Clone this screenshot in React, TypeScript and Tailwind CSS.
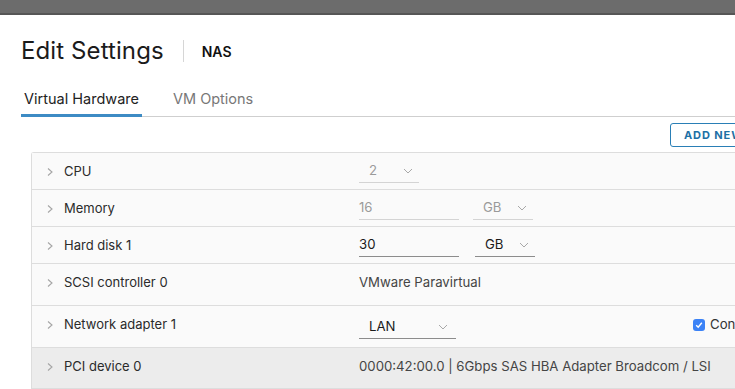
import React from 'react';

const font = { fontFamily: 'Inter, "Liberation Sans", sans-serif' };

const Chevron = () => (
    <svg width="8" height="10" viewBox="0 0 8 10" className="shrink-0">
        <polyline points="2,1.5 6,5 2,8.5" fill="none" stroke="#a5a5a5" strokeWidth="1.1" />
    </svg>
);

const Caret = () => (
    <svg width="10" height="6" viewBox="0 0 10 6" className="shrink-0">
        <polyline points="1,1 5,5 9,1" fill="none" stroke="#a8a8a8" strokeWidth="1" />
    </svg>
);

type RowProps = { label: string; h: string; pt?: string; bg?: string; children?: React.ReactNode };

const Row = ({ label, h, pt = 'pt-[8px]', bg = 'bg-[#fafafa]', children }: RowProps) => (
    <div className={`grid grid-cols-[327px_1fr] items-start border-b border-[#dddddd] ${h} ${bg}`}>
        <div className="flex items-center h-[22px] mt-[8px] pl-[14px] gap-[10px] text-[13px] text-[#2b2b2b]">
            <Chevron />
            <span>{label}</span>
        </div>
        <div className={`flex items-start text-[13.2px] whitespace-nowrap ${pt}`}>{children}</div>
    </div>
);

const App = () => {
    return (
        <div className="w-[735px] h-[389px] overflow-hidden bg-white" style={font}>
            <div className="h-[15px] bg-[#6c6c6c] border-b-2 border-[#565656]" />

            <div className="pl-[21px] pt-[21px]">
                <div className="flex items-center h-[30px]">
                    <h1 className="text-[24px] leading-[30px] text-[#1b1b1b] font-normal tracking-[0.1px]">Edit Settings</h1>
                    <div className="w-px h-[22px] bg-[#d6d6d6] ml-[19px] mr-[18px]" />
                    <span className="text-[14px] font-semibold text-[#111]">NAS</span>
                </div>

                <div className="mt-[22px] flex border-b border-[#cfcfcf] text-[14.5px]">
                    <div className="px-[3px] pb-[4px] border-b-[3px] border-[#3d8bc4] -mb-px text-[#222]">Virtual Hardware</div>
                    <div className="ml-[31px] pb-[4px] text-[#777]">VM Options</div>
                </div>
            </div>

            <div className="flex mt-[6px] pl-[670px]">
                <button className="shrink-0 h-[24px] w-[120px] border border-[#2a7fb6] rounded-[3px] text-left pl-[13px] text-[11px] font-bold tracking-[0.9px] text-[#1d6fa5] whitespace-nowrap">
                    ADD NEW DEVICE
                </button>
            </div>

            <div className="ml-[31px] mt-[5px] w-[720px] border-l border-t border-[#dddddd] rounded-tl-[3px]">
                <Row label="CPU" h="h-[37px]">
                    <div className="w-[60px] h-[22px] flex items-center justify-between pl-[10px] pr-[6px] border-b border-[#d4d4d4] text-[#9a9a9a]">
                        <span>2</span>
                        <Caret />
                    </div>
                </Row>
                <Row label="Memory" h="h-[37px]">
                    <div className="w-[100px] h-[22px] flex items-center border-b border-[#d4d4d4] text-[#9a9a9a]">16</div>
                    <div className="ml-[14px] w-[60px] h-[22px] flex items-center justify-between pl-[10px] pr-[6px] border-b border-[#d4d4d4] text-[#9a9a9a]">
                        <span>GB</span>
                        <Caret />
                    </div>
                </Row>
                <Row label="Hard disk 1" h="h-[37px]">
                    <div className="w-[100px] h-[22px] flex items-center border-b border-[#8c8c8c] text-[#1b1b1b]">30</div>
                    <div className="ml-[16px] w-[60px] h-[22px] flex items-center justify-between pl-[10px] pr-[6px] border-b border-[#8c8c8c] text-[#1b1b1b]">
                        <span>GB</span>
                        <Caret />
                    </div>
                </Row>
                <Row label="SCSI controller 0" h="h-[42px]">
                    <span className="h-[22px] flex items-center text-[#454545]">VMware Paravirtual</span>
                </Row>
                <Row label="Network adapter 1" h="h-[42px]" pt="pt-[11px]">
                    <div className="shrink-0 w-[97px] h-[22px] flex items-center justify-between pl-[10px] pr-[8px] border-b border-[#8c8c8c] text-[#1b1b1b]">
                        <span>LAN</span>
                        <Caret />
                    </div>
                    <div className="shrink-0 ml-[237px] -mt-[3px] h-[22px] flex items-center gap-[5px] text-[#333]">
                        <span className="w-[12px] h-[12px] rounded-[3px] bg-[#3b82f6] flex items-center justify-center">
                            <svg width="8" height="8" viewBox="0 0 8 8">
                                <polyline points="1.2,4.2 3.2,6.2 6.8,1.8" fill="none" stroke="white" strokeWidth="1.4" />
                            </svg>
                        </span>
                        <span>Connect At Power On</span>
                    </div>
                </Row>
                <Row label="PCI device 0" h="h-[41px]" bg="bg-[#ececec]">
                    <span className="h-[22px] flex items-center text-[#454545]">0000:42:00.0 | 6Gbps SAS HBA Adapter Broadcom / LSI</span>
                </Row>
            </div>
        </div>
    );
};

export default App;
